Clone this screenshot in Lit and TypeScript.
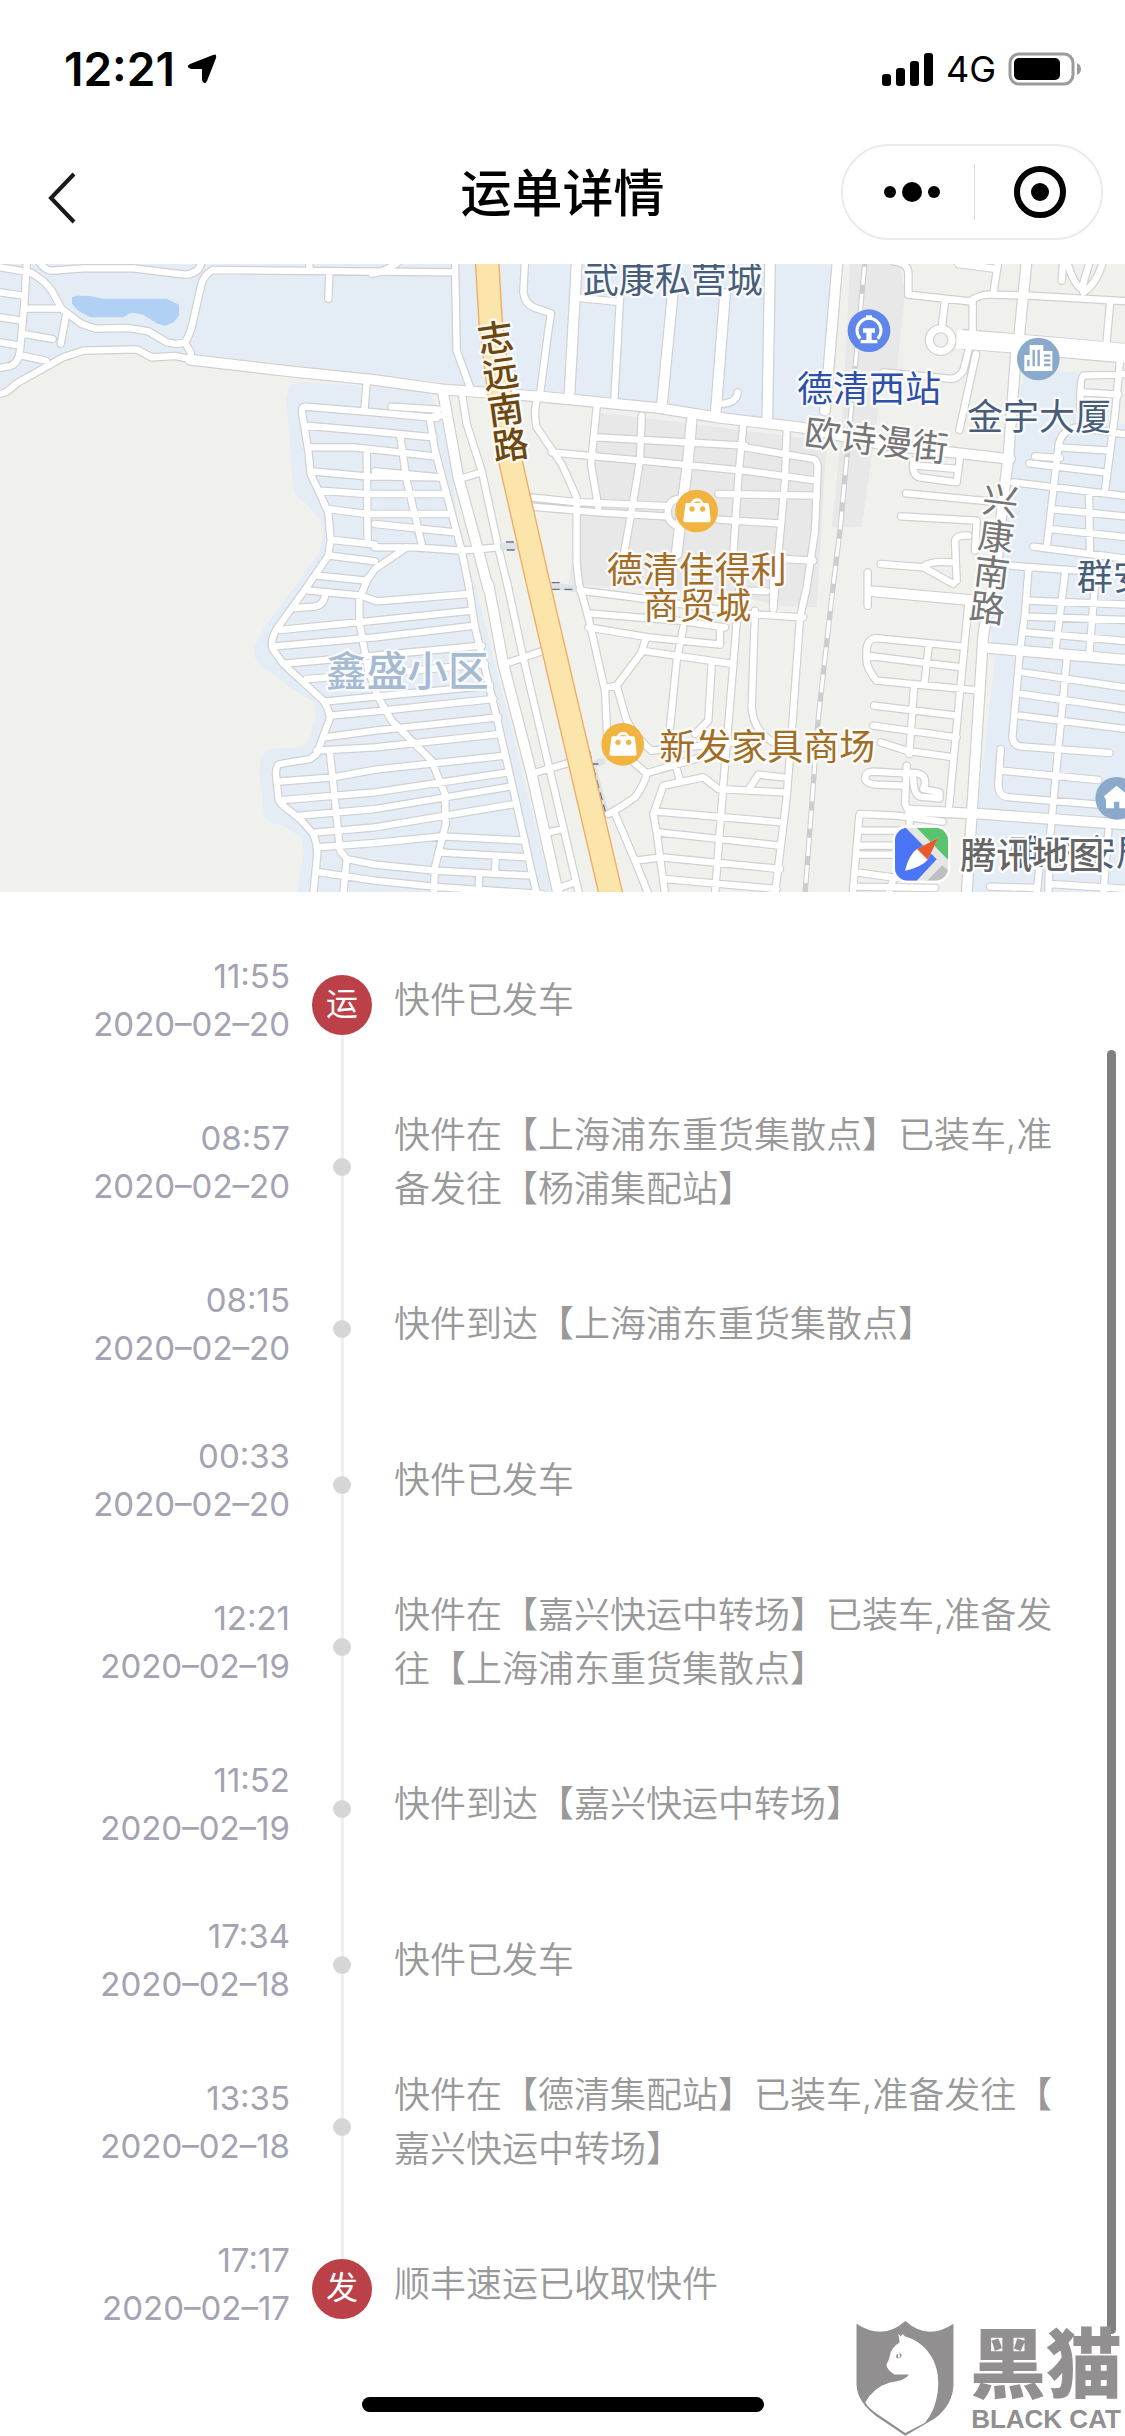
import { LitElement, html, css, svg } from "lit";
import { customElement, property } from "lit/decorators.js";

interface Tile {
  x: number;
  y: number;
  streets: string;
  avenues: string;
}

/* Street centre lines, grouped by map tile. One map unit is a third of a pixel. */
const tiles: Tile[] = [
  {
    x: 0,
    y: 0,
    streets: `M0 10L90 25Q130 45 155 80L185 135L245 180L288 194L385 192L445 202L500 235L530 240L555 236
      M80 0L72 130L60 260Q55 305 20 308L0 312 M0 85L70 95 M80 134H180 M0 160L65 170 M72 210L158 225
      M0 235L60 245 M198 155L182 240 M65 275L138 290 M115 -10Q135 20 155 20L250 13H400L555 32Q600 30 605 -10
      M555 236Q570 210 575 190L602 70Q610 30 640 18L1365 25 M555 236L572 265V285 M928 -10V20 M988 25L985 105
      M0 390Q20 388 50 358L190 280L250 260L410 256L455 280L525 276L570 285 M1100 355L1093 440
      M1310 462L1125 445L915 428Q903 430 907 450L925 560L932 630L985 745L992 830L985 875L920 970L830 1095Q810 1130 818 1155L850 1200L970 1310Q985 1330 990 1362L950 1470L930 1485L840 1500Q828 1503 828 1530L835 1600Q837 1615 850 1625L900 1665L940 1710Q952 1740 952 1770L940 1890
      M915 485L1125 503L1300 520 M930 550L1060 550L1125 557L1310 578 M935 622L1100 637L1320 640
      M960 680L1100 690L1335 690 M985 735L1100 750L1345 750 M1000 828L1125 842 M990 875L1125 892
      M950 935L1100 950L1125 915L1220 850 M1100 560L1103 835`,
    avenues: `M570 287L870 322L1125 348L1325 376L1625 398L1975 432L2150 460L2400 490L2650 542L3030 585`,
  },
  {
    x: 1125,
    y: 0,
    streets: `M240 -10L245 260L285 370 M450 -10L445 85Q450 125 490 135L528 148L520 200L495 390 M735 100L718 410 M615 102L735 114
      M1030 420Q1085 420 1088 385 M50 428L190 437 M-10 30Q40 20 75 -10 M165 470L180 560L260 860L280 960
      M75 510L95 650L140 840 M0 622L195 640 M0 780L240 805 M0 850H120L260 860L370 850 M180 455L210 455
      M260 385L275 480L320 620L370 850L400 975 M270 640L320 625
      M485 410Q475 450 485 490L560 600L605 700V900L612 960L640 1060L690 1280L697 1420
      M665 430L648 600L670 730 M530 565L800 590L1125 622L1325 650 M665 520L1110 545
      M800 455L795 590L770 740L745 880 M1105 480L1090 640L1075 870
      M465 700L600 714L870 726 M470 728L680 746L870 757 M1030 690L1325 695 M1030 767L1210 778`,
    avenues: `M605 0L583 400 M893 90L860 430 M1050 90L1022 450 M205 390L250 640L310 860L340 975 M950 470L938 600L925 700L905 870`,
  },
  {
    x: 2250,
    y: 0,
    streets: `M-15 550L190 585Q203 590 203 610L195 800L170 970L150 1060L125 1410L110 1600L75 1890 M110 500L105 650L85 870L70 1030 M100 885L190 890
      M430 -8Q475 -5 475 30V92L660 112Q690 90 720 92L840 95L1135 112 M625 0L740 15 M745 -10L730 90 M585 110L575 195 M668 110V210
      M1080 120L1070 230 M655 260L640 320Q620 350 590 343L400 325 M678 270L628 498 M1125 330L1000 335Q988 345 992 440
      M1110 290L1095 450L1065 680 M1000 385L1105 392 M925 550Q930 500 980 490L1135 512 M925 550L1080 560
      M855 577L930 582 M838 598L1065 625 M790 655L1135 697 M925 550L890 850 M1017 685L1020 870 M905 735L1135 758
      M900 795L1135 820 M850 848L1135 885 M490 590Q485 635 510 640L620 655L630 580 M500 605L625 615 M468 688L720 712
      M453 757L680 770L675 860 M620 950L615 830Q620 812 655 815 M392 900L520 910L610 960 M520 908Q540 890 605 895
      M780 905L985 920 M835 920L825 1050L810 1160L787 1420Q790 1448 820 1448L1078 1467 M353 925V1025 M940 -10L935 50 M950 -10Q970 60 995 75L1020 -10 M1060 -10Q1040 60 1000 85`,
    avenues: `M60 0L52 460 M262 0L225 440 M830 -10L808 210 M800 240L775 580L760 700L740 900L700 1110L650 1890`,
  },
  {
    x: 0,
    y: 960,
    streets: `M930 20L1085 35L1130 52L1405 30 M975 35Q970 65 940 68L885 72 M1105 -20L1078 45V110L1090 180L1105 260L1135 340L1175 410L1295 530L1335 630L1337 720L1305 850L1301 930
      M840 138L1125 110L1415 80 M825 187L1125 160L1425 125 M860 238L1125 215L1445 185 M920 285L1125 270L1455 240
      M980 352L1125 338L1470 305 M990 395L1125 382L1480 345 M975 460L1125 440L1495 400 M950 500L1125 490L1500 450
      M835 593L1000 580L1125 557L1515 515 M850 648L1125 625L1525 565 M900 695L1125 675L1535 607 M950 745L1125 730L1545 660
      M950 790L1125 777L1325 757L1575 770 M1040 825L1125 842L1305 860L1595 875 M960 865L1125 890L1325 910L1625 930
      M990 510L1000 600L1020 800L1040 825L1030 930`,
    avenues: ``,
  },
  {
    x: 1125,
    y: 960,
    streets: `M280 0L300 130L365 400L420 640L485 930 M190 805L460 820 M362 825L360 865 M312 875V930
      M395 -10L440 200L520 540L612 930 M395 238L505 200 M475 568L588 535 M520 745L565 735 M550 912L600 895
      M615 20L760 38L1125 90L1285 100 M640 88L910 110L1050 130 M640 130L820 160L1035 182V130 M810 170L800 205L725 305L690 312
      M800 200L1075 240 M925 130L905 230L885 430 M1095 -10L1075 240L1045 600L1020 930 M1010 240L1000 410L960 450
      M725 305L755 410Q790 470 830 500L1130 470 M770 530L815 568L1045 500 M905 555L915 590 M815 568Q810 600 780 640Q740 670 700 690
      M720 690L780 830L820 930 M780 830L860 820L1215 855 M865 605L985 580L1030 615L1225 625 M865 605L835 690L845 745L870 930
      M840 682L1220 715 M850 745L1215 785 M870 885L1205 915 M1140 80L1130 370Q1135 440 1195 475 M1125 610L1150 572L1225 580 M1195 -10L1195 75 M1125 20L1175 22`,
    avenues: `M340 0L385 240L470 570L550 930`,
  },
  {
    x: 2250,
    y: 960,
    streets: `M655 60L597 670 M640 188L385 163Q345 160 350 215Q345 250 380 290L690 320 M350 215L635 250 M537 180L523 300
      M492 310L478 510 M372 365L620 395 M370 425L620 460 M392 475L470 500L610 520 M470 545L465 660L480 690L478 730
      M460 568L370 563Q345 563 345 585Q350 600 380 602L460 605 M470 568Q530 560 525 600L520 615L568 625V643L510 638Q490 630 490 580
      M330 690L440 695L578 713 M328 695L308 930 M325 740H450 M330 785H450 M325 812H450 M320 865L440 882 M320 908L555 912 M430 885L415 930
      M835 50L1135 62 M830 98L1135 108 M830 145L1135 172 M945 -30L915 210 M1035 0L1018 210 M820 265L1135 312 M815 330L1135 376
      M810 395L1135 436 M950 230L915 600L900 760L895 930 M752 495L745 600Q745 640 780 640L1045 662 M755 560L1045 588
      M870 830L860 930 M720 908L860 912 M1075 740L1060 930 M900 900L1135 915`,
    avenues: `M370 22L680 50 M480 680L700 690L1135 722 M715 192L1135 228`,
  },
];

const pins = [
  { x: 2607, y: 200, color: "#5f86ea", kind: "rail" },
  { x: 3115, y: 285, color: "#8aa9cb", kind: "tower" },
  { x: 2090, y: 741, color: "#f2b441", kind: "bag" },
  { x: 1868, y: 1441, color: "#f2b441", kind: "bag" },
  { x: 3350, y: 1603, color: "#8aa9cb", kind: "home" },
];

const glyphs: Record<string, unknown> = {
  rail: svg`<path d="M-26 24A36 36 0 1 1 26 24" fill="none" stroke="#fff" stroke-width="9"/>
    <path d="M-9 -46H9V-34H-9ZM-18 -7H18V6H8V28H25V38H-25V28H-8V6H-18Z" fill="#fff"/>`,
  tower: svg`<path d="M-42 -12H-26V-42H15V-24H42V36H-42Z" fill="#fff"/>
    <path d="M-30 2V22M-14 -28V22M1 -28V22M17 -10H36M17 4H36M17 18H36" stroke="#8aa9cb" stroke-width="7"/>`,
  bag: svg`<path d="M-30 -24H-18Q-12 -38 2 -38Q14 -38 20 -24H32Q36 -24 37 -18L42 28Q42 34 36 34H-34Q-40 34 -40 28L-34 -18Q-34 -24 -30 -24Z" fill="#fff"/>
    <path d="M-9 -24Q2 -34 13 -24Z" fill="#f2b441"/><circle cx="-14" cy="-6" r="8" fill="#f2b441"/><circle cx="18" cy="-6" r="8" fill="#f2b441"/>`,
  home: svg`<path d="M0 -38L38 -6L32 4V30H8V10H-8V30H-32V4L-38 -6Z" fill="#fff"/>`,
};

@customElement("route-map")
export class RouteMap extends LitElement {
  static styles = css`
    :host { display: block; overflow: hidden; }
    .map { display: block; width: 100%; height: auto; background: #f0f1ec; }
    .roads { fill: none; stroke-linecap: round; stroke-linejoin: round; }
    .casing { stroke: #d0d0d0; }
    .casing .street { stroke-width: 26px; }
    .casing .avenue { stroke-width: 36px; }
    .surface { stroke: #fff; }
    .surface .street { stroke-width: 19px; }
    .surface .avenue { stroke-width: 29px; }
    .label {
      font-family: "Noto Sans CJK SC", sans-serif;
      font-size: 108px;
      fill: #485e78;
      stroke: #fffc;
      stroke-width: 14px;
      stroke-linejoin: round;
      paint-order: stroke;
    }
    .middle { text-anchor: middle; }
    .upright { writing-mode: vertical-rl; text-orientation: upright; text-anchor: middle; }
    .road-name { fill: #757575; }
    .highway-name { fill: #6b4813; font-weight: 500; }
    .station { fill: #2d4fa8; }
    .shop { fill: #a26d25; }
    .estate { font-size: 122px; font-weight: 500; fill: #a6bbd1; }
    .brand { font-weight: 500; fill: #666; stroke: #fff; }
  `;

  private layer(kind: string) {
    return svg`<g class="roads ${kind}">
      ${tiles.map((t) => svg`<g transform="translate(${t.x} ${t.y})">
        <path class="street" d=${t.streets}/><path class="avenue" d=${t.avenues}/></g>`)}
    </g>`;
  }

  render() {
    return html`<svg class="map" viewBox="0 0 3375 1884" role="img" aria-label="腾讯地图">
      <g fill="#e4ecf6">
        <path d="M0 0H2500L2460 475L2250 462L1825 415L1125 330L680 280L560 285L410 258L250 260L50 360L0 390Z"/>
        <path d="M870 362L905 354L1125 368L1285 385L1320 440L1360 660L1385 870L1425 960L1575 1560L1655 1884H890L912 1760L905 1720L850 1685L810 1677L792 1655L778 1520L785 1475L808 1455L905 1450L930 1425L948 1355L940 1315L850 1255L785 1205L762 1175V1148L800 1080L890 960L958 865L968 820L962 770L920 720L888 695L878 660L868 520L857 400Z"/>
        <path d="M3072 320L3235 325V450L3375 480V1884H2905L2985 1180L2970 1100L3020 640Z"/>
      </g>
      <path fill="#b0d1f4" d="M216 100L230 95L270 96L310 104H500L537 122V155L520 175L495 185L470 178L430 152L400 146L385 150L370 160H270L235 140L216 120Z"/>
      <g fill="#e8e8e8">
        <path d="M1795 445L2480 530L2475 620L2450 1030L2330 1025L2200 990L1840 970L1705 960L1745 740L1780 700V600Z"/>
        <path d="M2550 0H2700L2715 90L2690 320L2650 330L2585 790H2495L2525 500L2540 200Z"/>
      </g>
      ${this.layer("casing")}
      <g fill="none" stroke="#d0d0d0">
        <path d="M2885 225L3030 237L3375 268" stroke-width="62"/>
        <circle cx="2822" cy="228" r="34" stroke-width="28"/>
        <path d="M2050 703Q2003 703 2003 745Q2003 780 2045 792" stroke-width="26"/>
      </g>
      ${this.layer("surface")}
      <g fill="none" stroke="#fff">
        <path d="M2870 225L3030 237L3380 268" stroke-width="56"/>
        <circle cx="2822" cy="228" r="34" stroke-width="21"/>
        <path d="M2050 703Q2003 703 2003 745Q2003 780 2045 792" stroke-width="19"/>
      </g>
      <g fill="none">
        <path d="M2595 -10L2520 800L2500 960L2455 1360L2415 1890" stroke="#cdcdcd" stroke-width="16"/>
        <path d="M2595 -10L2520 800L2500 960L2455 1360L2415 1890" stroke="#fff" stroke-width="10" stroke-dasharray="54 28" stroke-dashoffset="-18"/>
      </g>
      <g fill="none" stroke-width="20" stroke="#dde1e8">
        <path d="M1500 847H1560M1650 965L1730 975M1770 1505L1815 1490M1775 1500L1815 1640"/>
        <path d="M1518 834H1546M1520 858H1548M1655 956H1680M1655 976H1730M1768 1460L1778 1500H1795M1780 1512L1816 1642" stroke="#6c6f80" stroke-width="4" stroke-dasharray="24 14"/>
      </g>
      <g fill="none">
        <path d="M1461 -10L1472 175L1500 400L1531 590L1615 960L1834 1896" stroke="#f0ab60" stroke-width="74"/>
        <path d="M1461 -10L1472 175L1500 400L1531 590L1615 960L1834 1896" stroke="#fbe5ab" stroke-width="66"/>
      </g>
      ${pins.map((p) => svg`<g transform="translate(${p.x} ${p.y})"><circle r="64" fill=${p.color}/>${glyphs[p.kind]}</g>`)}
      <text class="label" x="1748" y="86">武康私营城</text>
      <text class="label highway-name upright" transform="translate(1509 381) rotate(-8)">志远南路</text>
      <text class="label station" x="2391" y="413">德清西站</text>
      <text class="label road-name middle" transform="translate(2624 568) rotate(7)">欧诗漫街</text>
      <text class="label" x="2901" y="497">金宇大厦</text>
      <text class="label road-name upright" transform="translate(2982 870) rotate(7)">兴康南路</text>
      <text class="label" x="3230" y="977">群安</text>
      <text class="label shop" x="1820" y="956">德清佳得利</text>
      <text class="label shop" x="1930" y="1066">商贸城</text>
      <text class="label estate" x="978" y="1266">鑫盛小区</text>
      <text class="label shop" x="1978" y="1488">新发家具商场</text>
      <text class="label" x="3024" y="1806">雅丽安居</text>
      <g transform="translate(2685 1691)">
        <clipPath id="tile"><rect width="159" height="159" rx="38"/></clipPath>
        <rect x="-7" y="-7" width="173" height="173" rx="44" fill="#fff"/>
        <g clip-path="url(#tile)">
          <rect width="159" height="159" fill="#e6e6e6"/>
          <path d="M0 0H32L125 95L65 159H0Z" fill="#4975f6"/>
          <path d="M65 0H159V96Z" fill="#59c36d"/>
          <path d="M96 159L142 113L159 128V159Z" fill="#bfbfbf"/>
          <path d="M130 30L66 64Q42 80 30 129Q80 118 98 96Z" fill="#fff"/>
          <path d="M130 30L66 64L98 96Z" fill="#e8592d"/>
        </g>
      </g>
      <text class="label brand" x="2881" y="1814">腾讯地图</text>
    </svg>`;
  }
}

@customElement("status-bar")
export class StatusBar extends LitElement {
  static styles = css`
    :host { display: flex; align-items: center; justify-content: space-between; height: 138px; padding: 0 43px 0 64px; box-sizing: border-box; }
    .group { display: flex; align-items: center; gap: 12px; }
    .time { font-size: 46px; font-weight: 600; line-height: 56px; }
    .network { font-size: 36px; line-height: 48px; }
    svg { display: block; }
  `;
  render() {
    return html`<div class="group">
        <span class="time">12:21</span>
        <svg width="30" height="30" viewBox="0 0 30 30" aria-hidden="true"><path d="M26 1Q30 -1 29 4L20 27Q17 32 15 26V15H4Q-2 13 3 10Z"/></svg>
      </div>
      <div class="group">
        <svg width="52" height="33" viewBox="0 0 52 33" aria-hidden="true">
          <rect y="21" width="9" height="12" rx="3"/><rect x="14" y="15" width="9" height="18" rx="3"/>
          <rect x="28" y="8" width="9" height="25" rx="3"/><rect x="42" y="0" width="9" height="33" rx="3"/>
        </svg>
        <span class="network">4G</span>
        <svg width="74" height="34" viewBox="0 0 74 34" aria-hidden="true">
          <rect x="2" y="2" width="63" height="30" rx="9" fill="none" stroke="#9b9b9b" stroke-width="3"/>
          <rect x="6" y="6" width="46" height="22" rx="5"/>
          <path d="M69 11Q73 13 73 17T69 23Z" fill="#9b9b9b"/>
        </svg>
      </div>`;
  }
}

@customElement("nav-bar")
export class NavBar extends LitElement {
  @property() heading = "";
  static styles = css`
    :host { display: grid; grid-template-columns: 1fr auto 1fr; align-items: center; height: 126px; padding: 0 22px 18px; box-sizing: border-box; }
    h1 { margin: 0; padding-top: 4px; font-size: 51px; line-height: 72px; font-weight: 500; }
    button { display: flex; align-items: center; justify-content: center; margin: 0; padding: 0; border: 0; background: none; }
    svg { display: block; }
    .back { justify-self: start; width: 80px; height: 96px; padding-top: 12px; }
    .capsule { justify-self: end; display: flex; align-items: center; width: 262px; height: 96px; box-sizing: border-box; border: 2px solid #ebebeb; border-radius: 48px; }
    .capsule button { flex: 1; height: 92px; }
    .capsule .more { padding-left: 8px; }
    .capsule .close { padding-left: 4px; }
    .rule { width: 1px; height: 56px; background: #d9d9d9; }
  `;
  render() {
    return html`<button class="back" aria-label="返回">
        <svg width="30" height="52" viewBox="0 0 30 52"><path d="M27 2L4 26L27 50" fill="none" stroke="#1a1a1a" stroke-width="4"/></svg>
      </button>
      <h1>${this.heading}</h1>
      <div class="capsule">
        <button class="more" aria-label="更多"><svg width="56" height="20" viewBox="0 0 56 20"><circle cx="6" cy="10" r="6"/><circle cx="28" cy="10" r="10"/><circle cx="50" cy="10" r="6"/></svg></button>
        <span class="rule"></span>
        <button class="close" aria-label="关闭"><svg width="52" height="52" viewBox="0 0 52 52"><circle cx="26" cy="26" r="23" fill="none" stroke="#000" stroke-width="6"/><circle cx="26" cy="26" r="9"/></svg></button>
      </div>`;
  }
}

interface Stop {
  time: string;
  date: string;
  text: string;
  mark?: string;
}

const stops: Stop[] = [
  { time: "11:55", date: "2020–02–20", text: "快件已发车", mark: "运" },
  { time: "08:57", date: "2020–02–20", text: "快件在【上海浦东重货集散点】已装车,准备发往【杨浦集配站】" },
  { time: "08:15", date: "2020–02–20", text: "快件到达【上海浦东重货集散点】" },
  { time: "00:33", date: "2020–02–20", text: "快件已发车" },
  { time: "12:21", date: "2020–02–19", text: "快件在【嘉兴快运中转场】已装车,准备发往【上海浦东重货集散点】" },
  { time: "11:52", date: "2020–02–19", text: "快件到达【嘉兴快运中转场】" },
  { time: "17:34", date: "2020–02–18", text: "快件已发车" },
  { time: "13:35", date: "2020–02–18", text: "快件在【德清集配站】已装车,准备发往【嘉兴快运中转场】" },
  { time: "17:17", date: "2020–02–17", text: "顺丰速运已收取快件", mark: "发" },
];

@customElement("track-list")
export class TrackList extends LitElement {
  static styles = css`
    :host { display: block; position: relative; padding-top: 30px; }
    ol { margin: 0; padding: 0; list-style: none; }
    li { display: grid; grid-template-columns: 290px 104px 1fr; padding-right: 60px; }
    .when { display: flex; flex-direction: column; justify-content: center; padding: 30px 0; text-align: right; font-size: 33px; line-height: 48px; font-weight: 400; color: #a3a3b1; }
    .what { align-self: center; margin: 0; padding: 30px 0; font-size: 36px; line-height: 54px; font-weight: 350; color: #999; line-break: anywhere; }
    .rail { display: grid; grid-template-rows: 1fr auto 1fr; justify-items: center; margin: 5px 0 -5px; }
    .rail::before, .rail::after { content: ""; width: 3px; background: #efefef; }
    li:first-child .rail::before, li:last-child .rail::after { background: none; }
    .dot { width: 18px; height: 18px; border-radius: 50%; background: #d6d6d6; }
    .mark { width: 60px; height: 60px; border-radius: 50%; background: #bb4048; color: #fff; font-size: 32px; line-height: 58px; text-align: center; }
    .scroll { position: absolute; top: 158px; right: 9px; bottom: 28px; width: 9px; border-radius: 5px; background: #808080; }
  `;
  render() {
    return html`<ol>
        ${stops.map((s) => html`<li>
          <time class="when"><span>${s.time}</span><span>${s.date}</span></time>
          <div class="rail">${s.mark ? html`<span class="mark">${s.mark}</span>` : html`<span class="dot"></span>`}</div>
          <p class="what">${s.text}</p>
        </li>`)}
      </ol>
      <div class="scroll"></div>`;
  }
}

@customElement("cat-badge")
export class CatBadge extends LitElement {
  static styles = css`
    :host { display: flex; align-items: flex-end; gap: 16px; color: #918f90; }
    svg { display: block; }
    .words { display: flex; flex-direction: column; align-items: center; }
    .name { font-size: 76px; line-height: 76px; font-weight: 900; }
    .latin { font-family: "Liberation Sans", sans-serif; font-size: 26px; line-height: 34px; font-weight: 700; white-space: nowrap; }
  `;
  render() {
    return html`<svg width="98" height="115" viewBox="0 0 292 344" aria-hidden="true">
        <path fill="#918f90" d="M1 8Q80 60 147 0Q214 60 291 8V190Q290 250 235 292L147 343L60 285Q2 240 1 190Z"/>
        <path fill="#fff" d="M126 38L134 46L139 39L146 46Q205 62 232 120Q250 160 244 212Q236 270 206 304L147 335L65 280Q38 262 27 244Q50 200 100 184Q148 178 158 160L114 160Q92 146 90 130Q98 118 100 106Q104 78 130 64Z"/>
        <path fill="#918f90" d="M119 106Q120 98 127 97Q122 104 127 112Q121 112 119 106ZM129 96Q137 98 136 104Q134 111 128 112Q134 104 129 96Z"/>
      </svg>
      <div class="words"><span class="name">黑猫</span><span class="latin">BLACK CAT</span></div>`;
  }
}

@customElement("app-root")
export class AppRoot extends LitElement {
  static styles = css`
    :host { display: block; position: relative; overflow: hidden; background: #fff; color: #000; font-family: Inter, "Noto Sans CJK SC", sans-serif; }
    .home { display: flex; justify-content: center; padding: 35px 0 24px; }
    .home span { width: 402px; height: 15px; border-radius: 8px; background: #000; }
    cat-badge { position: absolute; right: 3px; bottom: 0; }
  `;
  render() {
    return html`<status-bar></status-bar>
      <nav-bar heading="运单详情"></nav-bar>
      <route-map></route-map>
      <track-list></track-list>
      <div class="home"><span></span></div>
      <cat-badge></cat-badge>`;
  }
}
